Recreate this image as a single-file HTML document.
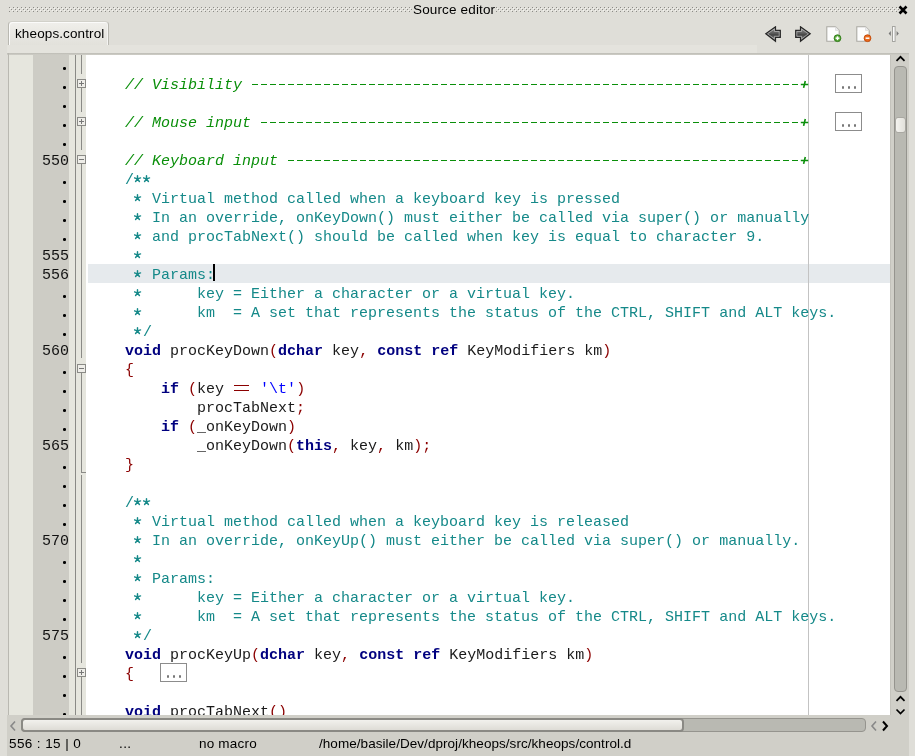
<!DOCTYPE html><html><head><meta charset="utf-8"><style>
*{margin:0;padding:0;box-sizing:border-box}
html,body{width:915px;height:756px;overflow:hidden;background:#dfded8;position:relative;font-family:"Liberation Sans",sans-serif}
.a{position:absolute}
#root{position:absolute;left:0;top:0;width:915px;height:756px;will-change:transform}
.dots{position:absolute;top:7px;height:5px;background-image:radial-gradient(circle at 1px 1px,#a9a8a2 0.8px,transparent 1px);background-size:4px 2px}
#title{position:absolute;top:2px;left:413px;width:82px;font-size:13.5px;letter-spacing:0.15px;color:#000;white-space:nowrap;line-height:16px}
#tab{position:absolute;left:8px;top:21px;width:101px;height:24px;border:1px solid #b9b8b1;border-top-color:#d2d1ca;border-bottom:none;border-radius:4px 4px 0 0;background:linear-gradient(#f0efeb,#e2e1db);box-shadow:inset 1px 1px 0 #fbfbfa,inset -1px 0 0 #f4f4f2}
#tabtxt{position:absolute;left:15px;top:26px;font-size:13.5px;color:#000;letter-spacing:0.12px;white-space:nowrap;line-height:16px}
#band{position:absolute;left:7px;top:45px;width:750px;height:8px;background:#e4e3dd}
#frame{position:absolute;left:7px;top:53px;width:902px;height:2px;background:linear-gradient(#bdbcb5,#cfcec7)}
#editor{position:absolute;left:9px;top:55px;width:881px;height:660px;background:#fff;overflow:hidden}
#g1{position:absolute;left:8px;top:53px;width:1px;height:662px;background:#b9b8b1}
#gl{position:absolute;left:9px;top:55px;width:24px;height:660px;background:#e6e6de}
#gn{position:absolute;left:33px;top:55px;width:36px;height:660px;background:#cdccc5}
#gs{position:absolute;left:69px;top:55px;width:6px;height:660px;background:#e6e6de}
#gv{position:absolute;left:75px;top:55px;width:1px;height:660px;background:#8a8a86}
#gf{position:absolute;left:76px;top:55px;width:10px;height:660px;background:#e6e6de}
.num{position:absolute;left:33px;width:36px;text-align:right;font-family:"Liberation Mono",monospace;font-size:15px;line-height:19px;color:#111}
.dot{position:absolute;left:63.2px;width:2.7px;height:2.7px;border-radius:50%;background:#000}
.fl{position:absolute;left:81px;width:1px;background:#8a8a86}
.flh{position:absolute;left:81px;width:5px;height:1px;background:#8a8a86}
.fb{position:absolute;left:77px;width:9px;height:9px;border:1px solid #8a8a86;background:#eeede8}
.fbh{position:absolute;left:1px;top:3px;width:5px;height:1px;background:#777}
.fbv{position:absolute;left:3px;top:1px;width:1px;height:5px;background:#777}
#hl{position:absolute;left:88px;top:264px;width:802px;height:19px;background:#e6eaed}
#margin{position:absolute;left:808px;top:55px;width:1px;height:660px;background:#c3c3c3}
.ln{position:absolute;left:89px;white-space:pre;font-family:"Liberation Mono",monospace;font-size:15px;line-height:19px;color:#1a1a1a}
.c{color:#158989}
.lc{color:#0a8f0a;font-style:italic}
.k{color:#00007f;font-weight:bold}
.p{color:#8b0000}
.s{color:#0000ff}
.i{color:#1a1a1a}
.dash{display:inline-block;height:19px;vertical-align:top;background-image:linear-gradient(90deg,transparent 1px,#0a8f0a 1px,#0a8f0a 7.5px,transparent 7.5px);background-size:9px 1.4px;background-repeat:repeat-x;background-position:0 7.8px}
.plus{display:inline-block;vertical-align:top}
.ast{display:inline-block;vertical-align:top}
.eq{display:inline-block;width:18px;height:1px;position:relative}
.eq:before{content:"";position:absolute;left:1px;width:15px;top:-7px;height:4px;border-top:1.2px solid #8b0000;border-bottom:1.2px solid #8b0000}
#cursor{position:absolute;left:213px;top:264px;width:2px;height:17px;background:#000}
.ebox{position:absolute;width:27px;height:19px;border:1px solid #8c8c8c;background:#fff}
.ebox i{position:absolute;top:11.3px;width:2.5px;height:2.5px;border-radius:50%;background:#777}
#vs{position:absolute;left:890px;top:55px;width:19px;height:678px;background:#d0cfc8}
#hs{position:absolute;left:7px;top:715px;width:883px;height:18px;background:#d0cfc8}
#corner{position:absolute;left:890px;top:715px;width:19px;height:18px;background:#d0cfc8}
#status{position:absolute;left:7px;top:733px;width:902px;height:23px;background:#d0cfc8}
#vtrough{position:absolute;left:894px;top:66px;width:13px;height:626px;border:1px solid #95948e;border-radius:4px;background:#b9b9b2}
#vthumb{position:absolute;left:895px;top:117px;width:11px;height:16px;border:1px solid #a9a8a2;border-radius:3px;background:linear-gradient(90deg,#f4f3ef,#e2e1db)}
#htrough{position:absolute;left:21px;top:718px;width:845px;height:14px;border:1px solid #95948e;border-radius:4px;background:#b9b9b2}
#hthumb{position:absolute;left:21px;top:718px;width:663px;height:14px;border:2px solid #8a8984;border-radius:4px;background:linear-gradient(#f2f1ed,#dedcd6)}
.st{position:absolute;top:736px;font-size:13.5px;letter-spacing:0.4px;color:#000;white-space:nowrap;line-height:16px}
</style></head><body><div id="root"><svg class="a" style="left:0;top:0" width="915" height="20"><defs><pattern id="pd1" x="1" y="7" width="4" height="4" patternUnits="userSpaceOnUse"><rect x="0" y="0" width="1" height="1" fill="#8d8c87"/><rect x="2" y="2" width="1" height="1" fill="#8d8c87"/><rect x="1" y="1" width="1" height="1" fill="#f4f3ef"/><rect x="3" y="3" width="1" height="1" fill="#f4f3ef"/></pattern><pattern id="pd2" x="0" y="7" width="4" height="4" patternUnits="userSpaceOnUse"><rect x="0" y="0" width="1" height="1" fill="#8d8c87"/><rect x="2" y="2" width="1" height="1" fill="#8d8c87"/><rect x="1" y="1" width="1" height="1" fill="#f4f3ef"/><rect x="3" y="3" width="1" height="1" fill="#f4f3ef"/></pattern></defs><rect x="9" y="7" width="403" height="5" fill="url(#pd1)"/><rect x="496" y="7" width="403" height="5" fill="url(#pd2)"/></svg>
<div id="title">Source editor</div>
<svg class="a" style="left:898px;top:5px" width="10" height="10" viewBox="0 0 10 10"><path d="M1.5 1.5L8.5 8.5M8.5 1.5L1.5 8.5" stroke="#000" stroke-width="2.6"/></svg>
<div id="band"></div>
<div id="tab"></div><div id="tabtxt">kheops.control</div>
<svg class="a" style="left:764px;top:26px" width="18" height="17" viewBox="0 0 18 17"><defs><linearGradient id="ga" x1="0" y1="0" x2="0" y2="1"><stop offset="0" stop-color="#9a9a9a"/><stop offset="0.45" stop-color="#5a5a5a"/><stop offset="0.55" stop-color="#444"/><stop offset="1" stop-color="#8a8a8a"/></linearGradient></defs><path d="M1.8 7.8L11.5 0.8V4.3H16.3V11.4H11.5V15.3Z" fill="url(#ga)" stroke="#262626" stroke-width="1.2" stroke-linejoin="miter"/><path d="M3.6 7.8L10.4 3V5.4H15.2V10.3H10.4V12.8Z" fill="none" stroke="#c8c8c8" stroke-width="0.8" opacity="0.8"/></svg>
<svg class="a" style="left:794px;top:26px" width="18" height="17" viewBox="0 0 18 17"><path d="M16.2 7.8L6.5 0.8V4.3H1.7V11.4H6.5V15.3Z" fill="url(#ga)" stroke="#262626" stroke-width="1.2" stroke-linejoin="miter"/><path d="M14.4 7.8L7.6 3V5.4H2.8V10.3H7.6V12.8Z" fill="none" stroke="#c8c8c8" stroke-width="0.8" opacity="0.8"/></svg>
<svg class="a" style="left:825px;top:25px" width="18" height="18" viewBox="0 0 18 18"><path d="M1.8 1.8H10.5L14.2 5.5V16.2H1.8Z" fill="#fdfdfd" stroke="#aaa9a3" stroke-width="1.1"/><path d="M10.5 1.8V5.5H14.2" fill="#ececec" stroke="#dcdcdc" stroke-width="0.8"/><circle cx="12.5" cy="13.2" r="3.4" fill="#55a535" stroke="#2f7a18" stroke-width="0.9"/><path d="M10.6 13.2H14.4" stroke="#fff" stroke-width="1.5"/><path d="M12.5 11.3V15.1" stroke="#fff" stroke-width="1.5"/></svg>
<svg class="a" style="left:855px;top:25px" width="18" height="18" viewBox="0 0 18 18"><path d="M1.8 1.8H10.5L14.2 5.5V16.2H1.8Z" fill="#fdfdfd" stroke="#aaa9a3" stroke-width="1.1"/><path d="M10.5 1.8V5.5H14.2" fill="#ececec" stroke="#dcdcdc" stroke-width="0.8"/><circle cx="12.5" cy="13.2" r="3.4" fill="#ec6a1c" stroke="#c04808" stroke-width="0.9"/><path d="M10.6 13.2H14.4" stroke="#fff" stroke-width="1.5"/></svg>
<svg class="a" style="left:886px;top:25px" width="14" height="18" viewBox="0 0 14 18"><rect x="6.5" y="1.5" width="2.6" height="15" fill="#fafafa" stroke="#a5a5a0"/><path d="M4.8 6L2.6 8.5L4.8 11Z" fill="#777"/><path d="M10.6 6L12.8 8.5L10.6 11Z" fill="#777"/></svg>
<div id="frame"></div><div id="g1"></div>
<div id="editor"></div>
<div id="gl"></div><div id="gn"></div><div id="gs"></div><div id="gv"></div><div id="gf"></div>
<div id="hl"></div><div id="margin"></div>
<div class="dot" style="top:67.2px"></div>
<div class="dot" style="top:86.2px"></div>
<div class="dot" style="top:105.2px"></div>
<div class="dot" style="top:124.2px"></div>
<div class="dot" style="top:143.2px"></div>
<div class="num" style="top:152px">550</div>
<div class="dot" style="top:181.2px"></div>
<div class="dot" style="top:200.2px"></div>
<div class="dot" style="top:219.2px"></div>
<div class="dot" style="top:238.2px"></div>
<div class="num" style="top:247px">555</div>
<div class="num" style="top:266px">556</div>
<div class="dot" style="top:295.2px"></div>
<div class="dot" style="top:314.2px"></div>
<div class="dot" style="top:333.2px"></div>
<div class="num" style="top:342px">560</div>
<div class="dot" style="top:371.2px"></div>
<div class="dot" style="top:390.2px"></div>
<div class="dot" style="top:409.2px"></div>
<div class="dot" style="top:428.2px"></div>
<div class="num" style="top:437px">565</div>
<div class="dot" style="top:466.2px"></div>
<div class="dot" style="top:485.2px"></div>
<div class="dot" style="top:504.2px"></div>
<div class="dot" style="top:523.2px"></div>
<div class="num" style="top:532px">570</div>
<div class="dot" style="top:561.2px"></div>
<div class="dot" style="top:580.2px"></div>
<div class="dot" style="top:599.2px"></div>
<div class="dot" style="top:618.2px"></div>
<div class="num" style="top:627px">575</div>
<div class="dot" style="top:656.2px"></div>
<div class="dot" style="top:675.2px"></div>
<div class="dot" style="top:694.2px"></div>
<div class="dot" style="top:713.2px"></div>
<div class="fl" style="top:55px;height:19px"></div>
<div class="fl" style="top:88px;height:24px"></div>
<div class="fl" style="top:126px;height:24px"></div>
<div class="fl" style="top:164px;height:194px"></div>
<div class="fl" style="top:373px;height:99px"></div>
<div class="fl" style="top:475px;height:188px"></div>
<div class="fl" style="top:677px;height:38px"></div>
<div class="flh" style="top:472px"></div>
<div class="fb" style="top:79px"><div class="fbh"></div><div class="fbv"></div></div>
<div class="fb" style="top:117px"><div class="fbh"></div><div class="fbv"></div></div>
<div class="fb" style="top:155px"><div class="fbh"></div></div>
<div class="fb" style="top:364px"><div class="fbh"></div></div>
<div class="fb" style="top:668px"><div class="fbh"></div><div class="fbv"></div></div>
<div class="ln" style="top:76px">    <span class="lc">// Visibility </span><span class="dash" style="width:549px"></span><svg class="plus" width="9" height="19" viewBox="0 0 9 19"><path d="M0.8 8.5H8.2M5.3 5.0L3.6 11.9" stroke="#0a8f0a" stroke-width="1.6" fill="none"/></svg></div>
<div class="ln" style="top:114px">    <span class="lc">// Mouse input </span><span class="dash" style="width:540px"></span><svg class="plus" width="9" height="19" viewBox="0 0 9 19"><path d="M0.8 8.5H8.2M5.3 5.0L3.6 11.9" stroke="#0a8f0a" stroke-width="1.6" fill="none"/></svg></div>
<div class="ln" style="top:152px">    <span class="lc">// Keyboard input </span><span class="dash" style="width:513px"></span><svg class="plus" width="9" height="19" viewBox="0 0 9 19"><path d="M0.8 8.5H8.2M5.3 5.0L3.6 11.9" stroke="#0a8f0a" stroke-width="1.6" fill="none"/></svg></div>
<div class="ln" style="top:171px">    <span class="c">/</span><svg class="ast" width="9" height="19" viewBox="0 0 9 19"><path d="M3.50 7.90L3.50 4.70M3.50 7.90L6.54 6.91M3.50 7.90L5.38 10.49M3.50 7.90L1.62 10.49M3.50 7.90L0.46 6.91" stroke="#158989" stroke-width="1.45" stroke-linecap="round" fill="none"/></svg><svg class="ast" width="9" height="19" viewBox="0 0 9 19"><path d="M3.50 7.90L3.50 4.70M3.50 7.90L6.54 6.91M3.50 7.90L5.38 10.49M3.50 7.90L1.62 10.49M3.50 7.90L0.46 6.91" stroke="#158989" stroke-width="1.45" stroke-linecap="round" fill="none"/></svg></div>
<div class="ln" style="top:190px">    <span class="c"> </span><svg class="ast" width="9" height="19" viewBox="0 0 9 19"><path d="M3.50 7.90L3.50 4.70M3.50 7.90L6.54 6.91M3.50 7.90L5.38 10.49M3.50 7.90L1.62 10.49M3.50 7.90L0.46 6.91" stroke="#158989" stroke-width="1.45" stroke-linecap="round" fill="none"/></svg><span class="c"> Virtual method called when a keyboard key is pressed</span></div>
<div class="ln" style="top:209px">    <span class="c"> </span><svg class="ast" width="9" height="19" viewBox="0 0 9 19"><path d="M3.50 7.90L3.50 4.70M3.50 7.90L6.54 6.91M3.50 7.90L5.38 10.49M3.50 7.90L1.62 10.49M3.50 7.90L0.46 6.91" stroke="#158989" stroke-width="1.45" stroke-linecap="round" fill="none"/></svg><span class="c"> In an override, onKeyDown() must either be called via super() or manually</span></div>
<div class="ln" style="top:228px">    <span class="c"> </span><svg class="ast" width="9" height="19" viewBox="0 0 9 19"><path d="M3.50 7.90L3.50 4.70M3.50 7.90L6.54 6.91M3.50 7.90L5.38 10.49M3.50 7.90L1.62 10.49M3.50 7.90L0.46 6.91" stroke="#158989" stroke-width="1.45" stroke-linecap="round" fill="none"/></svg><span class="c"> and procTabNext() should be called when key is equal to character 9.</span></div>
<div class="ln" style="top:247px">    <span class="c"> </span><svg class="ast" width="9" height="19" viewBox="0 0 9 19"><path d="M3.50 7.90L3.50 4.70M3.50 7.90L6.54 6.91M3.50 7.90L5.38 10.49M3.50 7.90L1.62 10.49M3.50 7.90L0.46 6.91" stroke="#158989" stroke-width="1.45" stroke-linecap="round" fill="none"/></svg></div>
<div class="ln" style="top:266px">    <span class="c"> </span><svg class="ast" width="9" height="19" viewBox="0 0 9 19"><path d="M3.50 7.90L3.50 4.70M3.50 7.90L6.54 6.91M3.50 7.90L5.38 10.49M3.50 7.90L1.62 10.49M3.50 7.90L0.46 6.91" stroke="#158989" stroke-width="1.45" stroke-linecap="round" fill="none"/></svg><span class="c"> Params:</span></div>
<div class="ln" style="top:285px">    <span class="c"> </span><svg class="ast" width="9" height="19" viewBox="0 0 9 19"><path d="M3.50 7.90L3.50 4.70M3.50 7.90L6.54 6.91M3.50 7.90L5.38 10.49M3.50 7.90L1.62 10.49M3.50 7.90L0.46 6.91" stroke="#158989" stroke-width="1.45" stroke-linecap="round" fill="none"/></svg><span class="c">      key = Either a character or a virtual key.</span></div>
<div class="ln" style="top:304px">    <span class="c"> </span><svg class="ast" width="9" height="19" viewBox="0 0 9 19"><path d="M3.50 7.90L3.50 4.70M3.50 7.90L6.54 6.91M3.50 7.90L5.38 10.49M3.50 7.90L1.62 10.49M3.50 7.90L0.46 6.91" stroke="#158989" stroke-width="1.45" stroke-linecap="round" fill="none"/></svg><span class="c">      km  = A set that represents the status of the CTRL, SHIFT and ALT keys.</span></div>
<div class="ln" style="top:323px">    <span class="c"> </span><svg class="ast" width="9" height="19" viewBox="0 0 9 19"><path d="M3.50 7.90L3.50 4.70M3.50 7.90L6.54 6.91M3.50 7.90L5.38 10.49M3.50 7.90L1.62 10.49M3.50 7.90L0.46 6.91" stroke="#158989" stroke-width="1.45" stroke-linecap="round" fill="none"/></svg><span class="c">/</span></div>
<div class="ln" style="top:342px">    <span class="k">void</span> <span class="i">procKeyDown</span><span class="p">(</span><span class="k">dchar</span><span class="i"> key</span><span class="p">,</span> <span class="k">const</span> <span class="k">ref</span><span class="i"> KeyModifiers km</span><span class="p">)</span></div>
<div class="ln" style="top:361px">    <span class="p">{</span></div>
<div class="ln" style="top:380px">        <span class="k">if</span> <span class="p">(</span><span class="i">key</span> <span class="eq"></span> <span class="s">&#x27;\t&#x27;</span><span class="p">)</span></div>
<div class="ln" style="top:399px">            <span class="i">procTabNext</span><span class="p">;</span></div>
<div class="ln" style="top:418px">        <span class="k">if</span> <span class="p">(</span><span class="i">_onKeyDown</span><span class="p">)</span></div>
<div class="ln" style="top:437px">            <span class="i">_onKeyDown</span><span class="p">(</span><span class="k">this</span><span class="p">,</span><span class="i"> key</span><span class="p">,</span><span class="i"> km</span><span class="p">)</span><span class="p">;</span></div>
<div class="ln" style="top:456px">    <span class="p">}</span></div>
<div class="ln" style="top:494px">    <span class="c">/</span><svg class="ast" width="9" height="19" viewBox="0 0 9 19"><path d="M3.50 7.90L3.50 4.70M3.50 7.90L6.54 6.91M3.50 7.90L5.38 10.49M3.50 7.90L1.62 10.49M3.50 7.90L0.46 6.91" stroke="#158989" stroke-width="1.45" stroke-linecap="round" fill="none"/></svg><svg class="ast" width="9" height="19" viewBox="0 0 9 19"><path d="M3.50 7.90L3.50 4.70M3.50 7.90L6.54 6.91M3.50 7.90L5.38 10.49M3.50 7.90L1.62 10.49M3.50 7.90L0.46 6.91" stroke="#158989" stroke-width="1.45" stroke-linecap="round" fill="none"/></svg></div>
<div class="ln" style="top:513px">    <span class="c"> </span><svg class="ast" width="9" height="19" viewBox="0 0 9 19"><path d="M3.50 7.90L3.50 4.70M3.50 7.90L6.54 6.91M3.50 7.90L5.38 10.49M3.50 7.90L1.62 10.49M3.50 7.90L0.46 6.91" stroke="#158989" stroke-width="1.45" stroke-linecap="round" fill="none"/></svg><span class="c"> Virtual method called when a keyboard key is released</span></div>
<div class="ln" style="top:532px">    <span class="c"> </span><svg class="ast" width="9" height="19" viewBox="0 0 9 19"><path d="M3.50 7.90L3.50 4.70M3.50 7.90L6.54 6.91M3.50 7.90L5.38 10.49M3.50 7.90L1.62 10.49M3.50 7.90L0.46 6.91" stroke="#158989" stroke-width="1.45" stroke-linecap="round" fill="none"/></svg><span class="c"> In an override, onKeyUp() must either be called via super() or manually.</span></div>
<div class="ln" style="top:551px">    <span class="c"> </span><svg class="ast" width="9" height="19" viewBox="0 0 9 19"><path d="M3.50 7.90L3.50 4.70M3.50 7.90L6.54 6.91M3.50 7.90L5.38 10.49M3.50 7.90L1.62 10.49M3.50 7.90L0.46 6.91" stroke="#158989" stroke-width="1.45" stroke-linecap="round" fill="none"/></svg></div>
<div class="ln" style="top:570px">    <span class="c"> </span><svg class="ast" width="9" height="19" viewBox="0 0 9 19"><path d="M3.50 7.90L3.50 4.70M3.50 7.90L6.54 6.91M3.50 7.90L5.38 10.49M3.50 7.90L1.62 10.49M3.50 7.90L0.46 6.91" stroke="#158989" stroke-width="1.45" stroke-linecap="round" fill="none"/></svg><span class="c"> Params:</span></div>
<div class="ln" style="top:589px">    <span class="c"> </span><svg class="ast" width="9" height="19" viewBox="0 0 9 19"><path d="M3.50 7.90L3.50 4.70M3.50 7.90L6.54 6.91M3.50 7.90L5.38 10.49M3.50 7.90L1.62 10.49M3.50 7.90L0.46 6.91" stroke="#158989" stroke-width="1.45" stroke-linecap="round" fill="none"/></svg><span class="c">      key = Either a character or a virtual key.</span></div>
<div class="ln" style="top:608px">    <span class="c"> </span><svg class="ast" width="9" height="19" viewBox="0 0 9 19"><path d="M3.50 7.90L3.50 4.70M3.50 7.90L6.54 6.91M3.50 7.90L5.38 10.49M3.50 7.90L1.62 10.49M3.50 7.90L0.46 6.91" stroke="#158989" stroke-width="1.45" stroke-linecap="round" fill="none"/></svg><span class="c">      km  = A set that represents the status of the CTRL, SHIFT and ALT keys.</span></div>
<div class="ln" style="top:627px">    <span class="c"> </span><svg class="ast" width="9" height="19" viewBox="0 0 9 19"><path d="M3.50 7.90L3.50 4.70M3.50 7.90L6.54 6.91M3.50 7.90L5.38 10.49M3.50 7.90L1.62 10.49M3.50 7.90L0.46 6.91" stroke="#158989" stroke-width="1.45" stroke-linecap="round" fill="none"/></svg><span class="c">/</span></div>
<div class="ln" style="top:646px">    <span class="k">void</span> <span class="i">procKeyUp</span><span class="p">(</span><span class="k">dchar</span><span class="i"> key</span><span class="p">,</span> <span class="k">const</span> <span class="k">ref</span><span class="i"> KeyModifiers km</span><span class="p">)</span></div>
<div class="ln" style="top:665px">    <span class="p">{</span></div>
<div class="ln" style="top:703px">    <span class="k">void</span> <span class="i">procTabNext</span><span class="p">()</span></div>
<div id="cursor"></div>
<div class="ebox" style="left:835px;top:74px"><i style="left:5.7px"></i><i style="left:11.7px"></i><i style="left:17.7px"></i></div>
<div class="ebox" style="left:835px;top:112px"><i style="left:5.7px"></i><i style="left:11.7px"></i><i style="left:17.7px"></i></div>
<div class="ebox" style="left:160px;top:663px"><i style="left:5.7px"></i><i style="left:11.7px"></i><i style="left:17.7px"></i></div>
<div id="vs"></div><div id="hs"></div><div id="status"></div>
<div class="a" style="left:890px;top:55px;width:1px;height:660px;background:#c4c3bc"></div><div id="vtrough"></div><div id="vthumb"></div>
<svg class="a" style="left:895px;top:54px" width="12" height="10" viewBox="0 0 12 10"><path d="M1.5 6.8L5.5 2.8L9.5 6.8" fill="none" stroke="#000" stroke-width="1.7"/></svg>
<svg class="a" style="left:895px;top:694px" width="12" height="10" viewBox="0 0 12 10"><path d="M1.5 6.8L5.5 2.8L9.5 6.8" fill="none" stroke="#000" stroke-width="1.7"/></svg>
<svg class="a" style="left:895px;top:707px" width="12" height="10" viewBox="0 0 12 10"><path d="M1.5 2.5L5.5 6.5L9.5 2.5" fill="none" stroke="#000" stroke-width="1.7"/></svg>
<div id="htrough"></div><div id="hthumb"></div>
<svg class="a" style="left:8px;top:720px" width="10" height="12" viewBox="0 0 10 12"><path d="M7 1.5L3 6L7 10.5" fill="none" stroke="#888" stroke-width="1.6"/></svg>
<svg class="a" style="left:869px;top:720px" width="10" height="12" viewBox="0 0 10 12"><path d="M7 1.5L3 6L7 10.5" fill="none" stroke="#888" stroke-width="1.6"/></svg>
<svg class="a" style="left:880px;top:720px" width="10" height="12" viewBox="0 0 10 12"><path d="M3 1.5L7 6L3 10.5" fill="none" stroke="#000" stroke-width="2"/></svg>
<div class="st" style="left:9px">556 : 15 | 0</div>
<div class="st" style="left:119px">...</div>
<div class="st" style="left:199px;letter-spacing:0.2px">no macro</div>
<div class="st" style="left:319px;letter-spacing:0.05px">/home/basile/Dev/dproj/kheops/src/kheops/control.d</div></div></body></html>
